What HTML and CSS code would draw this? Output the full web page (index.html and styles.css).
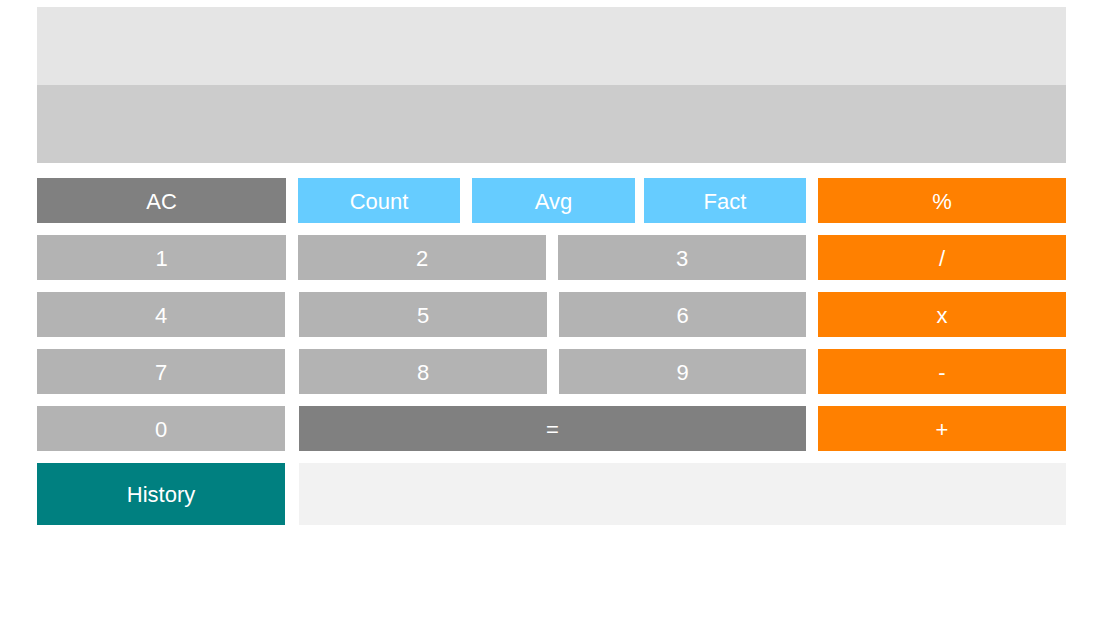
FILE: index.html
```html
<!DOCTYPE html>
<html>
<head>
<meta charset="utf-8">
<link rel="stylesheet" href="styles.css">
</head>
<body>
<div class="calc">
  <div class="display">
    <div class="screen screen-top"></div>
    <div class="screen screen-bottom"></div>
  </div>
  <div class="keys">
    <div class="row">
      <div class="key dark w249">AC</div>
      <div class="key blue w162">Count</div>
      <div class="key blue w163">Avg</div>
      <div class="key blue w162 tight">Fact</div>
      <div class="key orange w248">%</div>
    </div>
    <div class="row">
      <div class="key num w249">1</div>
      <div class="key num w248">2</div>
      <div class="key num w248">3</div>
      <div class="key orange w248">/</div>
    </div>
    <div class="row">
      <div class="key num w248">4</div>
      <div class="key num w248 wide">5</div>
      <div class="key num w247">6</div>
      <div class="key orange w248">x</div>
    </div>
    <div class="row">
      <div class="key num w248">7</div>
      <div class="key num w248 wide">8</div>
      <div class="key num w247">9</div>
      <div class="key orange w248">-</div>
    </div>
    <div class="row">
      <div class="key num w248">0</div>
      <div class="key dark w507 wide">=</div>
      <div class="key orange w248">+</div>
    </div>
    <div class="row row-hist">
      <div class="key teal w248">History</div>
      <div class="history-panel wide"></div>
    </div>
  </div>
</div>
</body>
</html>
```
FILE: styles.css
```css
html, body {
  margin: 0;
  padding: 0;
  background: #ffffff;
}
body {
  font-family: "Helvetica Neue", "Liberation Sans", Arial, sans-serif;
}
.calc {
  width: 1029px;
  padding: 7px 0 0 37px;
  display: flex;
  flex-direction: column;
  gap: 15px;
}
.display {
  display: flex;
  flex-direction: column;
}
.screen {
  height: 78px;
}
.screen-top { background: #e5e5e5; }
.screen-bottom { background: #cccccc; }
.keys {
  display: flex;
  flex-direction: column;
  gap: 12px;
}
.row {
  display: flex;
  height: 45px;
  gap: 12px;
}
.row-hist {
  height: 62px;
}
.key {
  flex: none;
  box-sizing: border-box;
  padding-top: 2px;
  display: flex;
  align-items: center;
  justify-content: center;
  color: #ffffff;
  font-size: 22px;
  line-height: 1;
}
.w162 { width: 162px; }
.w163 { width: 163px; }
.w247 { width: 247px; }
.w248 { width: 248px; }
.w249 { width: 249px; }
.w507 { width: 507px; }
.tight { margin-left: -3px; }
.wide { margin-left: 2px; }
.dark { background: #808080; }
.blue { background: #66ccff; }
.orange { background: #ff8000; }
.num { background: #b3b3b3; }
.teal { background: #008080; }
.history-panel {
  flex: 1;
  background: #f2f2f2;
}
```
